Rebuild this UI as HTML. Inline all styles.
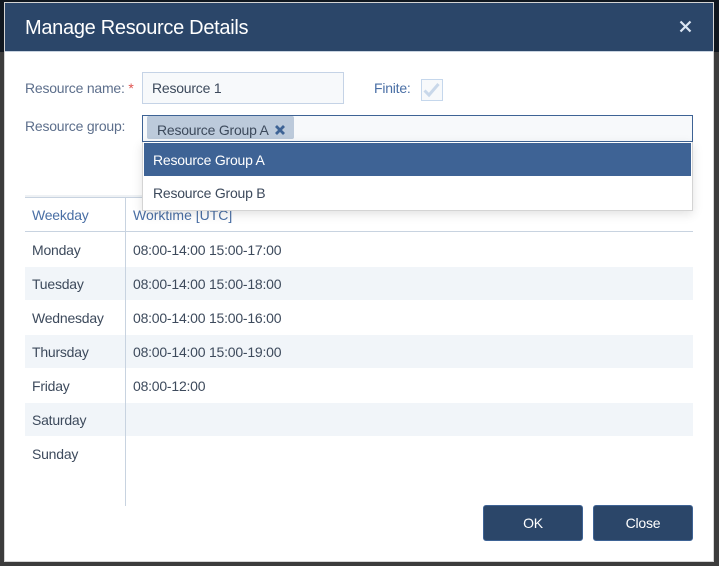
<!DOCTYPE html>
<html><head><meta charset="utf-8"><style>
html,body{margin:0;padding:0;width:719px;height:566px;overflow:hidden;background:#3c3c3c}
*{box-sizing:border-box}
body{font-family:"Liberation Sans",sans-serif;font-size:14px;letter-spacing:-.22px;color:#3d4a5c;position:relative}
.a{position:absolute;white-space:nowrap}
.t{line-height:20px;height:20px}
.lab{color:#4a6fa5}
</style></head><body>
<div class="a" style="left:0;top:0;width:719px;height:52px;background:#10171f"></div>
<div class="a" style="left:4px;top:2px;width:710px;height:560px;background:#fff;border:1px solid #d4d4d4"></div>
<div class="a" style="left:5px;top:3px;width:708px;height:48px;background:#2b4669"></div>
<div class="a" style="left:5px;top:51px;width:708px;height:1px;background:#c8d3e0"></div>
<div class="a" style="left:25px;top:15px;font-size:20px;letter-spacing:-.3px;line-height:26px;color:#fff">Manage Resource Details</div>
<svg class="a" style="left:679px;top:20px" width="13" height="13" viewBox="0 0 13 13"><path d="M1.5 1.5L11.5 11.5M11.5 1.5L1.5 11.5" stroke="#dbe6f3" stroke-width="2.2" fill="none"/></svg>

<div class="a t lab" style="left:25px;top:78px;color:#5d6f8c">Resource name: <span style="color:#e0534f">*</span></div>
<div class="a t" style="left:142px;top:72px;width:202px;height:32px;border:1px solid #c5d3e6;background:#f7f9fb;padding:5px 9px;line-height:20px">Resource 1</div>
<div class="a t lab" style="left:374px;top:78px">Finite:</div>
<div class="a" style="left:421px;top:79px;width:22px;height:22px;border:1px solid #c5d7ec;background:#f7f9fb"></div>
<svg class="a" style="left:423px;top:81px" width="18" height="18" viewBox="0 0 18 18"><path d="M1.5 9.5L6 14L15.5 3" stroke="#c9d8ea" stroke-width="3" fill="none"/></svg>

<div class="a t lab" style="left:25px;top:116px;color:#5d6f8c">Resource group:</div>
<div class="a" style="left:142px;top:115px;width:551px;height:27px;border:1px solid #3e6395;background:#f7f9fb"></div>
<div class="a t" style="left:147px;top:116px;width:147px;height:23px;background:#bccadb;border-radius:2px;padding:5px 0 0 10px;line-height:19px">Resource Group A</div>
<svg class="a" style="left:275px;top:125px" width="10" height="10" viewBox="0 0 10 10"><path d="M1 1L9 9M9 1L1 9" stroke="#3e6395" stroke-width="2.8" fill="none"/></svg>

<div class="a" style="left:25px;top:195px;width:668px;height:2px;background:#eef1f4"></div>
<div class="a" style="left:25px;top:197px;width:668px;height:1px;background:#c8d3e0"></div>
<div class="a" style="left:25px;top:231px;width:668px;height:1px;background:#c8d3e0"></div>
<div class="a" style="left:25px;top:267px;width:668px;height:33px;background:#f1f5f9"></div>
<div class="a" style="left:25px;top:335px;width:668px;height:33px;background:#f1f5f9"></div>
<div class="a" style="left:25px;top:403px;width:668px;height:33px;background:#f1f5f9"></div>
<div class="a" style="left:125px;top:197px;width:1px;height:309px;background:#c8d3e0"></div>

<div class="a t lab" style="left:32px;top:205px">Weekday</div>
<div class="a t lab" style="left:133px;top:205px;letter-spacing:0">Worktime [UTC]</div>
<div class="a t" style="left:32px;top:240px">Monday</div>
<div class="a t" style="left:32px;top:274px">Tuesday</div>
<div class="a t" style="left:32px;top:308px">Wednesday</div>
<div class="a t" style="left:32px;top:342px">Thursday</div>
<div class="a t" style="left:32px;top:376px">Friday</div>
<div class="a t" style="left:32px;top:410px">Saturday</div>
<div class="a t" style="left:32px;top:444px">Sunday</div>
<div class="a t" style="left:133px;top:240px">08:00-14:00 15:00-17:00</div>
<div class="a t" style="left:133px;top:274px">08:00-14:00 15:00-18:00</div>
<div class="a t" style="left:133px;top:308px">08:00-14:00 15:00-16:00</div>
<div class="a t" style="left:133px;top:342px">08:00-14:00 15:00-19:00</div>
<div class="a t" style="left:133px;top:376px">08:00-12:00</div>

<div class="a" style="left:142px;top:142px;width:551px;height:69px;background:#fff;border:1px solid #d4d4d4;border-top:0;box-shadow:0 3px 10px rgba(0,0,0,.12)"></div>
<div class="a t" style="left:144px;top:143px;width:547px;height:33px;background:#3e6395;color:#fff;padding:7px 9px;line-height:20px">Resource Group A</div>
<div class="a t" style="left:153px;top:183px">Resource Group B</div>

<div class="a" style="left:483px;top:505px;width:100px;height:36px;background:#2b4669;border:1px solid #3e6395;border-radius:3px;color:#fff;text-align:center;line-height:34px">OK</div>
<div class="a" style="left:593px;top:505px;width:100px;height:36px;background:#2b4669;border:1px solid #3e6395;border-radius:3px;color:#fff;text-align:center;line-height:34px">Close</div>
</body></html>
